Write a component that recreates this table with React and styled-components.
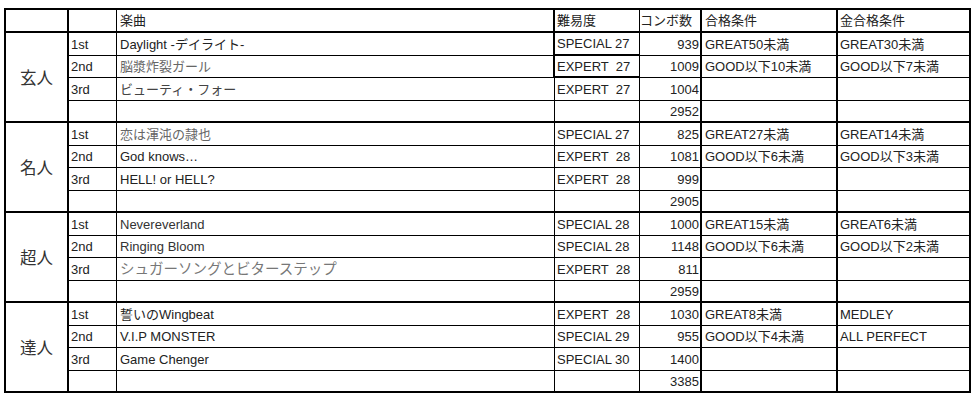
import React from "react";
import styled, { createGlobalStyle } from "styled-components";

const GlobalStyle = createGlobalStyle`
  * {
    box-sizing: border-box;
  }
  body {
    margin: 0;
    background: #ffffff;
    font-family: "Liberation Sans", "Noto Sans CJK JP", sans-serif;
  }
`;

const Page = styled.div`
  padding: 8px 0 0 4px;
`;

const Sheet = styled.table`
  border-collapse: separate;
  border-spacing: 0;
  table-layout: fixed;
  width: 967px;
  border-top: 2px solid #000;
  border-left: 2px solid #000;
  color: #222;
`;

const Col = styled.col`
  width: ${(p) => p.$w}px;
`;

const Row = styled.tr`
  height: ${(p) => p.$h}px;
`;

const Cell = styled.td`
  padding: 0 ${(p) => (p.$align === "right" ? 1 : 0)}px 0 ${(p) => p.$pad ?? 2}px;
  border-right: ${(p) => p.$right}px solid #000;
  border-bottom: ${(p) => p.$bottom}px solid #000;
  text-align: ${(p) => p.$align || "left"};
  vertical-align: middle;
  white-space: pre;
  overflow: hidden;
  line-height: 1;
  color: ${(p) => p.$tone || "#222"};
  font-size: ${(p) => p.$size || 13}px;
`;

const GroupCell = styled(Cell)`
  text-align: center;
  font-size: 16.5px;
  font-family: "Noto Sans CJK JP", sans-serif;
  color: #333;
  padding: 0;
`;

const widths = [63, 48, 438, 85, 62, 136, 133];
const rights = [2, 1, 1, 1, 2, 2, 2];
const pads = [2, 2, 3, 2, 0, 3, 2];
const heights = [23, 22, 23, 22];

const header = ["", "", "楽曲", "難易度", "コンボ数", "合格条件", "金合格条件"];

const groups = [
  {
    name: "玄人",
    total: "2952",
    songs: [
      { rank: "1st", title: "Daylight -デイライト-", level: "SPECIAL 27", combo: "939", pass: "GREAT50未満", gold: "GREAT30未満", boxed: true },
      { rank: "2nd", title: "脳漿炸裂ガール", tone: "#666", level: "EXPERT  27", combo: "1009", pass: "GOOD以下10未満", gold: "GOOD以下7未満", boxed: true },
      { rank: "3rd", title: "ビューティ・フォー", tone: "#444", level: "EXPERT  27", combo: "1004" },
    ],
  },
  {
    name: "名人",
    total: "2905",
    songs: [
      { rank: "1st", title: "恋は渾沌の隷也", tone: "#666", level: "SPECIAL 27", combo: "825", pass: "GREAT27未満", gold: "GREAT14未満" },
      { rank: "2nd", title: "God knows…", level: "EXPERT  28", combo: "1081", pass: "GOOD以下6未満", gold: "GOOD以下3未満" },
      { rank: "3rd", title: "HELL! or HELL?", level: "EXPERT  28", combo: "999" },
    ],
  },
  {
    name: "超人",
    total: "2959",
    songs: [
      { rank: "1st", title: "Nevereverland", tone: "#333", level: "SPECIAL 28", combo: "1000", pass: "GREAT15未満", gold: "GREAT6未満" },
      { rank: "2nd", title: "Ringing Bloom", tone: "#333", level: "SPECIAL 28", combo: "1148", pass: "GOOD以下6未満", gold: "GOOD以下2未満" },
      { rank: "3rd", title: "シュガーソングとビターステップ", tone: "#777", size: 14.5, level: "EXPERT  28", combo: "811" },
    ],
  },
  {
    name: "達人",
    total: "3385",
    songs: [
      { rank: "1st", title: "誓いのWingbeat", level: "EXPERT  28", combo: "1030", pass: "GREAT8未満", gold: "MEDLEY" },
      { rank: "2nd", title: "V.I.P MONSTER", level: "SPECIAL 29", combo: "955", pass: "GOOD以下4未満", gold: "ALL PERFECT" },
      { rank: "3rd", title: "Game Chenger", level: "SPECIAL 30", combo: "1400" },
    ],
  },
];

const rowCells = (song, total) =>
  song
    ? [song.rank, song.title, song.level, song.combo, song.pass || "", song.gold || ""]
    : ["", "", "", total, "", ""];

export default function App() {
  return (
    <Page>
      <GlobalStyle />
      <Sheet>
        <colgroup>
          {widths.map((w, i) => (
            <Col key={i} $w={w} />
          ))}
        </colgroup>
        <tbody>
          <Row $h={23}>
            {header.map((text, i) => (
              <Cell key={i} $right={i === 2 ? 2 : rights[i]} $bottom={2} $pad={pads[i]}>
                {text}
              </Cell>
            ))}
          </Row>
          {groups.map((g) =>
            [0, 1, 2, 3].map((r) => {
              const song = g.songs[r];
              const boxed = song && song.boxed;
              const bottom = r === 3 ? 2 : 1;
              return (
                <Row key={g.name + r} $h={heights[r]}>
                  {r === 0 && (
                    <GroupCell rowSpan={4} $right={2} $bottom={2}>
                      {g.name}
                    </GroupCell>
                  )}
                  {rowCells(song, g.total).map((text, i) => (
                    <Cell
                      key={i}
                      $right={boxed && i === 1 ? 2 : rights[i + 1]}
                      $bottom={boxed && i === 2 ? 2 : bottom}
                      $pad={pads[i + 1]}
                      $align={i === 3 ? "right" : "left"}
                      $tone={i === 1 && song ? song.tone : undefined}
                      $size={i === 1 && song ? song.size : undefined}
                    >
                      {text}
                    </Cell>
                  ))}
                </Row>
              );
            })
          )}
        </tbody>
      </Sheet>
    </Page>
  );
}
